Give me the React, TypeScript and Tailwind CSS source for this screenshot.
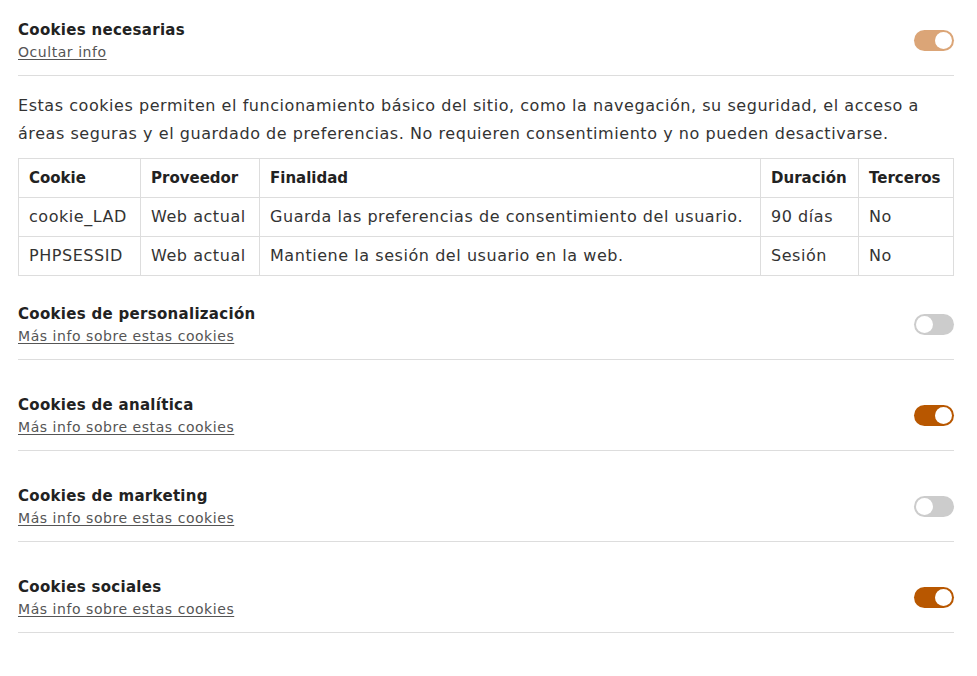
import { useState } from "react";

type Category = {
  id: string;
  title: string;
  on: boolean;
  locked?: boolean;
};

const categories: Category[] = [
  { id: "personalizacion", title: "Cookies de personalización", on: false },
  { id: "analitica", title: "Cookies de analítica", on: true },
  { id: "marketing", title: "Cookies de marketing", on: false },
  { id: "sociales", title: "Cookies sociales", on: true },
];

const rows = [
  ["cookie_LAD", "Web actual", "Guarda las preferencias de consentimiento del usuario.", "90 días", "No"],
  ["PHPSESSID", "Web actual", "Mantiene la sesión del usuario en la web.", "Sesión", "No"],
];

function Toggle({ on, locked, onClick }: { on: boolean; locked?: boolean; onClick?: () => void }) {
  const track = locked ? "bg-[#dba577]" : on ? "bg-[#b85700]" : "bg-[#cccccc]";
  return (
    <button
      type="button"
      onClick={onClick}
      className={`-mt-[2px] flex h-[21px] w-[40px] shrink-0 items-center rounded-full px-[2px] ${track} ${on ? "justify-end" : "justify-start"}`}
    >
      <span className="block h-[17px] w-[17px] rounded-full bg-white" />
    </button>
  );
}

function SectionHeader({
  title,
  link,
  on,
  locked,
  onToggle,
}: {
  title: string;
  link: string;
  on: boolean;
  locked?: boolean;
  onToggle?: () => void;
}) {
  return (
    <div className="flex items-center justify-between border-b border-[#dddddd] pb-[12px]">
      <div>
        <h3 className="text-[15px] font-bold leading-[22px] tracking-[0.3px] text-[#222222]">{title}</h3>
        <a
          href="#"
          className="block text-[14px] leading-[22px] tracking-[0.55px] text-[#555555] underline underline-offset-2"
        >
          {link}
        </a>
      </div>
      <Toggle on={on} locked={locked} onClick={onToggle} />
    </div>
  );
}

export default function App() {
  const [state, setState] = useState(categories.map((c) => c.on));

  return (
    <div
      className="min-h-screen bg-white pt-[19px] text-[#333333]"
      style={{ fontFamily: "'DejaVu Sans', sans-serif" }}
    >
      <div className="ml-[18px] w-[936px]">
        <SectionHeader title="Cookies necesarias" link="Ocultar info" on locked />

        <div className="pt-[16px]">
          <p className="text-[16px] leading-[28px] tracking-[0.55px] text-[#333333]">
            Estas cookies permiten el funcionamiento básico del sitio, como la navegación, su seguridad, el acceso a
            áreas seguras y el guardado de preferencias. No requieren consentimiento y no pueden desactivarse.
          </p>
          <table className="mt-[10px] w-full table-fixed border-collapse text-[16px] tracking-[0.55px] text-[#333333]">
            <colgroup>
              <col className="w-[122px]" />
              <col className="w-[119px]" />
              <col />
              <col className="w-[98px]" />
              <col className="w-[95px]" />
            </colgroup>
            <thead>
              <tr className="h-[39px] text-left">
                {["Cookie", "Proveedor", "Finalidad", "Duración", "Terceros"].map((h) => (
                  <th
                    key={h}
                    className="border border-[#dddddd] px-[10px] text-[15px] font-bold tracking-normal text-[#222222]"
                  >
                    {h}
                  </th>
                ))}
              </tr>
            </thead>
            <tbody>
              {rows.map((r) => (
                <tr key={r[0]} className="h-[39px]">
                  {r.map((c, i) => (
                    <td key={i} className="whitespace-nowrap border border-[#dddddd] px-[10px]">
                      {c}
                    </td>
                  ))}
                </tr>
              ))}
            </tbody>
          </table>
        </div>

        {categories.map((c, i) => (
          <div key={c.id} className={i === 0 ? "pt-[27px]" : "pt-[34px]"}>
            <SectionHeader
              title={c.title}
              link="Más info sobre estas cookies"
              on={state[i]}
              onToggle={() => setState((s) => s.map((v, j) => (j === i ? !v : v)))}
            />
          </div>
        ))}
      </div>
    </div>
  );
}
